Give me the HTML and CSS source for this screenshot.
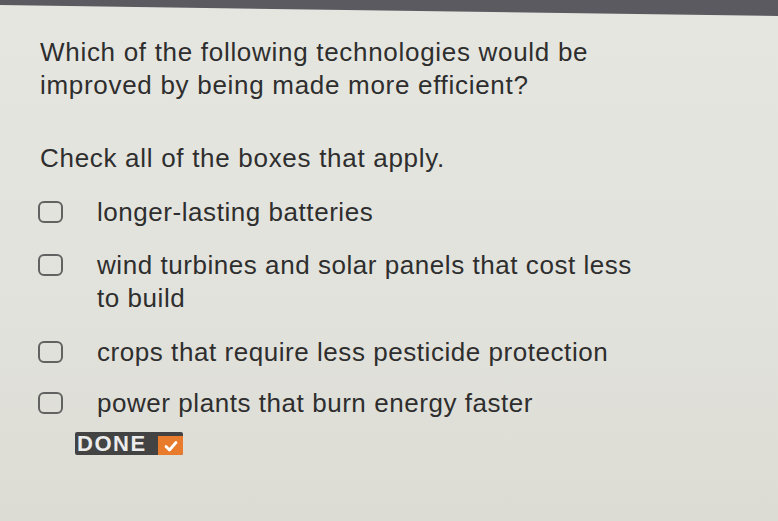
FILE: index.html
```html
<!DOCTYPE html>
<html>
<head>
<meta charset="utf-8">
<link rel="stylesheet" href="styles.css">
</head>
<body>
<div class="topbar"></div>
<main class="page">
  <p class="question">Which of the following technologies would be<br>improved by being made more efficient?</p>
  <p class="instruction">Check all of the boxes that apply.</p>
  <ul class="options">
    <li class="option o1"><span class="box"></span><span class="label">longer-lasting batteries</span></li>
    <li class="option o2"><span class="box"></span><span class="label">wind turbines and solar panels that cost less<br>to build</span></li>
    <li class="option o3"><span class="box"></span><span class="label">crops that require less pesticide protection</span></li>
    <li class="option o4"><span class="box"></span><span class="label">power plants that burn energy faster</span></li>
  </ul>
  <div class="done"><span class="done-text">DONE</span><span class="done-check"><svg viewBox="0 0 16 16" width="16" height="16"><path d="M3 8.5 L6.5 12 L13 4.5" fill="none" stroke="#fff" stroke-width="2.8" stroke-linecap="round" stroke-linejoin="round"/></svg></span></div>
</main>
</body>
</html>
```
FILE: styles.css
```css
html, body {
  margin: 0;
  padding: 0;
}
body {
  width: 778px;
  height: 521px;
  overflow: hidden;
  background: linear-gradient(180deg, #e6e6e0 0%, #e2e2dc 60%, #dcdcd5 100%);
  font-family: "Liberation Sans", Arial, sans-serif;
  color: #2e2e2e;
}
.topbar {
  height: 16px;
  background: #5b5a60;
  clip-path: polygon(0 0, 100% 0, 100% 100%, 0 32%);
}
.page {
  padding: 20px 0 0 38px;
}
.question {
  margin: 0 0 0 2px;
  font-size: 26px;
  line-height: 33px;
  letter-spacing: 0.7px;
}
.instruction {
  margin: 40px 0 0 2px;
  font-size: 26px;
  line-height: 33px;
  letter-spacing: 0.7px;
}
.options {
  list-style: none;
  margin: 21px 0 0 0;
  padding: 0;
}
.option {
  display: flex;
  align-items: flex-start;
  font-size: 26px;
  line-height: 33px;
  letter-spacing: 0.55px;
}
.o2 { margin-top: 20px; }
.o3 { margin-top: 21px; }
.o4 { margin-top: 18px; }
.box {
  flex: none;
  box-sizing: border-box;
  width: 25px;
  height: 22px;
  border: 2px solid #626262;
  border-radius: 6px;
  margin-top: 5px;
  margin-right: 34px;
}
.done {
  display: flex;
  width: 108px;
  height: 23px;
  margin: 12px 0 0 37px;
  background: #434343;
  border-radius: 2px;
  overflow: hidden;
}
.done-text {
  flex: 1;
  color: #ececec;
  font-weight: bold;
  font-size: 22px;
  letter-spacing: 1.5px;
  line-height: 24px;
  padding-left: 2px;
}
.done-check {
  width: 25px;
  background: #e87b2c;
  display: flex;
  align-items: center;
  justify-content: center;
  margin: 4px 0 0 0;
}
```
